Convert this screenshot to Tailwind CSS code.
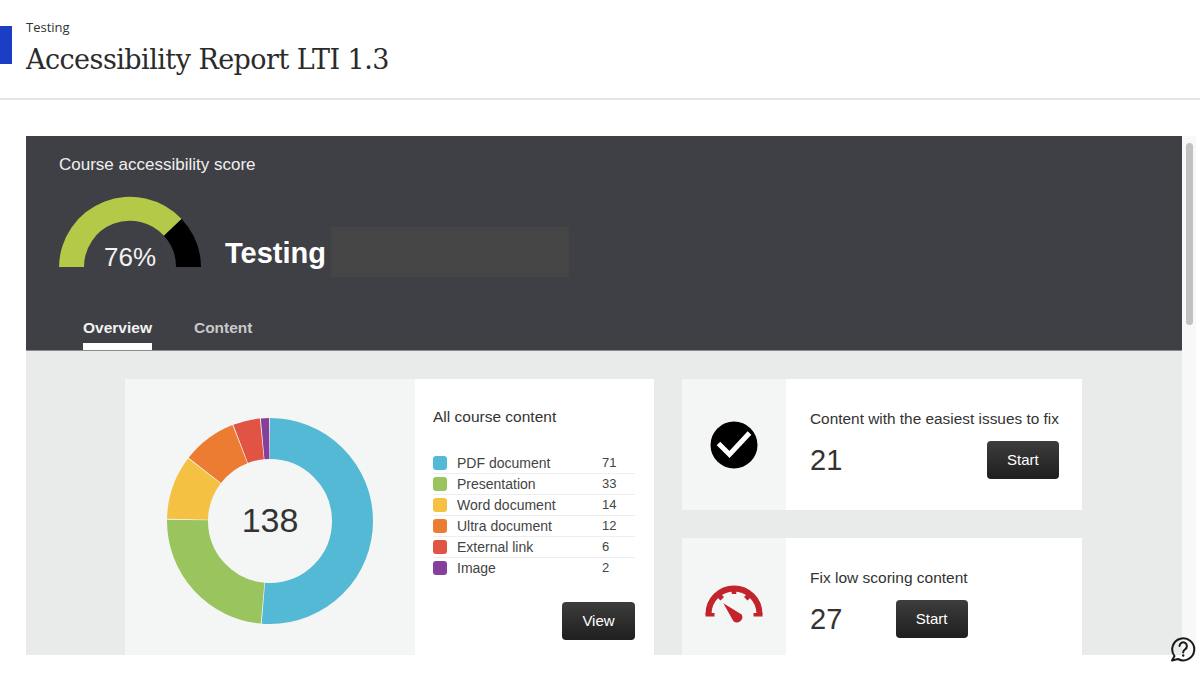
<!DOCTYPE html>
<html>

<head>
    <meta charset="utf-8">
    <meta name="viewport" content="width=device-width">
    <title>Accessibility Report LTI 1.3</title>
    <script src="https://cdn.jsdelivr.net/npm/@tailwindcss/browser@4"></script>
</head>

<body class="relative h-[674px] w-[1200px] overflow-hidden bg-white font-['Liberation_Sans',Arial,sans-serif] text-[#333]">

    <!-- Header -->
    <header class="flex h-[100px] items-start border-b-2 border-[#e4e4e4] bg-white">
        <div class="mt-[26px] h-[38px] w-[12px] bg-[#1a3fc4]"></div>
        <div class="ml-[14px] mt-[18px]">
            <p class="font-['Open_Sans',sans-serif] text-[13px] leading-[18px] text-[#333]">Testing</p>
            <h1 class="mt-[5px] font-['DejaVu_Serif',serif] text-[27px] leading-[38px] tracking-[-0.54px] text-[#2b2b2b]">Accessibility Report LTI 1.3</h1>
        </div>
    </header>

    <!-- Report frame -->
    <div class="ml-[26px] mt-[36px] flex h-[519px]">
        <main class="h-full w-[1156px] overflow-hidden bg-[#e9ebea]">

            <!-- Score banner -->
            <section class="flex h-[215px] flex-col border-b border-[#8a8b8d] bg-[#3f4045] pl-[33px] text-white">
                <p class="mt-[19px] text-[17px] leading-[20px] text-[#f0f0f0]">Course accessibility score</p>
                <div class="mt-[21px] flex items-end">
                    <div class="relative h-[71px] w-[142px]">
                        <svg viewBox="0 0 142 71" class="h-[71px] w-[142px]">
                            <path fill="#b3c947" d="M0 71A71 71 0 0 1 122.6 23L105 39.7A46 46 0 0 0 25 71Z"></path>
                            <path fill="#000" d="M122.6 23A71 71 0 0 1 142 71H117A46 46 0 0 0 105 39.7Z"></path>
                        </svg>
                        <span class="absolute bottom-[-5px] left-0 w-full text-center text-[26px] leading-[30px] text-[#f2f2f2]">76%</span>
                    </div>
                    <h2 class="mb-[-4px] ml-[24px] text-[29px] font-bold leading-[36px]">Testing</h2>
                    <div class="mb-[-10px] ml-[5px] h-[50px] w-[238px] bg-[#454545]"></div>
                </div>
                <nav class="mt-auto flex gap-[42px] pl-[24px] text-[15.5px] leading-[20px]">
                    <a class="border-b-[7px] border-white pb-[5px] font-bold text-[#f2f2f2]">Overview</a>
                    <a class="pb-[12px] font-bold text-[#c9c9c9]">Content</a>
                </nav>
            </section>

            <!-- Overview -->
            <section class="flex gap-[28px] pl-[99px] pt-[28px]">

                <div class="flex h-[284px] w-[529px] bg-white">
                    <div class="flex w-[290px] items-center justify-center bg-[#f4f6f6]">
                        <div class="relative h-[208px] w-[208px]">
                            <svg viewBox="0 0 208 208" class="h-[208px] w-[208px] -rotate-90" fill="none" stroke-width="41">
                                <circle cx="104" cy="104" r="82.5" pathLength="138" stroke="#54b9d4" stroke-dasharray="70.8 67.2" stroke-dashoffset="0"></circle>
                                <circle cx="104" cy="104" r="82.5" pathLength="138" stroke="#9ac45d" stroke-dasharray="32.8 105.2" stroke-dashoffset="-71"></circle>
                                <circle cx="104" cy="104" r="82.5" pathLength="138" stroke="#f5c143" stroke-dasharray="13.8 124.2" stroke-dashoffset="-104"></circle>
                                <circle cx="104" cy="104" r="82.5" pathLength="138" stroke="#ec7c32" stroke-dasharray="11.8 126.2" stroke-dashoffset="-118"></circle>
                                <circle cx="104" cy="104" r="82.5" pathLength="138" stroke="#e15444" stroke-dasharray="5.8 132.2" stroke-dashoffset="-130"></circle>
                                <circle cx="104" cy="104" r="82.5" pathLength="138" stroke="#85419a" stroke-dasharray="1.8 136.2" stroke-dashoffset="-136"></circle>
                            </svg>
                            <span class="absolute inset-0 flex items-center justify-center pb-[2px] text-[34px] text-[#333]">138</span>
                        </div>
                    </div>

                    <div class="w-[239px] pl-[18px] pr-[19px] pt-[29px]">
                        <h3 class="text-[15.5px] leading-[18px] text-[#333]">All course content</h3>
                        <ul class="mt-[27px] text-[14px] leading-[20px] text-[#444]">
                            <li class="flex h-[21px] items-center border-b border-[#eeeeee]">
                                <span class="h-[14px] w-[14px] rounded-[3px] bg-[#54b9d4]"></span>
                                <span class="ml-[10px] w-[145px]">PDF document</span><span class="text-[13px]">71</span>
                            </li>
                            <li class="flex h-[21px] items-center border-b border-[#eeeeee]">
                                <span class="h-[14px] w-[14px] rounded-[3px] bg-[#9ac45d]"></span>
                                <span class="ml-[10px] w-[145px]">Presentation</span><span class="text-[13px]">33</span>
                            </li>
                            <li class="flex h-[21px] items-center border-b border-[#eeeeee]">
                                <span class="h-[14px] w-[14px] rounded-[3px] bg-[#f5c143]"></span>
                                <span class="ml-[10px] w-[145px]">Word document</span><span class="text-[13px]">14</span>
                            </li>
                            <li class="flex h-[21px] items-center border-b border-[#eeeeee]">
                                <span class="h-[14px] w-[14px] rounded-[3px] bg-[#ec7c32]"></span>
                                <span class="ml-[10px] w-[145px]">Ultra document</span><span class="text-[13px]">12</span>
                            </li>
                            <li class="flex h-[21px] items-center border-b border-[#eeeeee]">
                                <span class="h-[14px] w-[14px] rounded-[3px] bg-[#e15444]"></span>
                                <span class="ml-[10px] w-[145px]">External link</span><span class="text-[13px]">6</span>
                            </li>
                            <li class="flex h-[21px] items-center border-b border-transparent">
                                <span class="h-[14px] w-[14px] rounded-[3px] bg-[#85419a]"></span>
                                <span class="ml-[10px] w-[145px]">Image</span><span class="text-[13px]">2</span>
                            </li>
                        </ul>
                        <div class="mt-[23px] flex justify-end">
                            <button class="h-[38px] w-[73px] rounded-[4px] bg-linear-to-b from-[#3d3d3d] to-[#1f1f1f] text-[15px] text-white">View</button>
                        </div>
                    </div>
                </div>

                <div class="flex w-[400px] flex-col gap-[28px]">
                    <div class="flex h-[131px] bg-white">
                        <div class="flex w-[104px] items-center justify-center bg-[#f4f6f6]">
                            <svg viewBox="0 0 48 48" class="h-[48px] w-[48px]">
                                <circle cx="24" cy="24" r="23.5" fill="#000"></circle>
                                <path d="M8.5 22.5L19.5 33.5L39.5 12" fill="none" stroke="#fff" stroke-width="5"></path>
                            </svg>
                        </div>
                        <div class="ml-[24px] w-fit pt-[31px]">
                            <p class="text-[15.4px] leading-[18px] text-[#333]">Content with the easiest issues to fix</p>
                            <div class="mt-[13px] flex h-[38px] items-start justify-between">
                                <span class="text-[29px] leading-[38px] text-[#333]">21</span>
                                <button class="h-[38px] w-[72px] rounded-[4px] bg-linear-to-b from-[#3d3d3d] to-[#1f1f1f] text-[15px] text-white">Start</button>
                            </div>
                        </div>
                    </div>

                    <div class="flex h-[131px] bg-white">
                        <div class="flex w-[104px] items-center justify-center bg-[#f4f6f6]">
                            <svg viewBox="0 0 60 42" class="h-[42px] w-[60px]">
                                <path d="M4.5 31A25.5 25.5 0 0 1 55.5 31" fill="none" stroke="#c3232a" stroke-width="6"></path>
                                <path d="M1.5 30H10.5V33.5H1.5ZM49.5 30H58.5V33.5H49.5ZM27.7 6H32.3V11H27.7ZM11.5 12.5L15 9L20 14L16.5 17.5ZM48.5 12.5L45 9L40 14L43.5 17.5Z" fill="#c3232a"></path>
                                <path d="M19.3 20.2L37.7 31.5A5.4 5.4 0 0 1 29.3 38Z" fill="#c3232a"></path>
                            </svg>
                        </div>
                        <div class="ml-[24px] w-fit pt-[31px]">
                            <p class="text-[15.5px] leading-[18px] text-[#333]">Fix low scoring content</p>
                            <div class="mt-[13px] flex h-[38px] items-start justify-between">
                                <span class="text-[29px] leading-[38px] text-[#333]">27</span>
                                <button class="h-[38px] w-[72px] rounded-[4px] bg-linear-to-b from-[#3d3d3d] to-[#1f1f1f] text-[15px] text-white">Start</button>
                            </div>
                        </div>
                    </div>
                </div>
            </section>
        </main>

        <!-- Scrollbar -->
        <div class="h-full w-[14px] bg-[#f8f8f8] pl-[4px] pt-[7px]">
            <div class="h-[182px] w-[7px] rounded-full bg-[#c1c1c1]"></div>
        </div>
    </div>

    <!-- Help -->
    <svg viewBox="0 0 26 26" class="absolute left-[1170px] top-[636px] h-[26px] w-[26px]" fill="none" stroke="#1a1a1a" stroke-width="2">
        <path d="M4.5 20A11 11 0 1 1 8 23L2 24.5Z" stroke-linejoin="round"></path>
        <path d="M9.5 10A3.7 3.7 0 1 1 15 13.3C13.7 14 13.2 14.8 13.2 16.5" stroke-linecap="round"></path>
        <circle cx="13.2" cy="19.5" r="1.2" fill="#1a1a1a" stroke="none"></circle>
    </svg>
</body>

</html>
